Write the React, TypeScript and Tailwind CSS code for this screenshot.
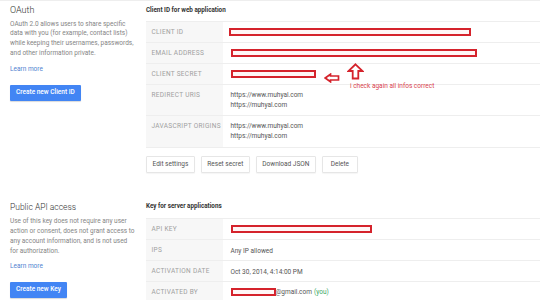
import React from "react";

function Redact({ w }: { w: string }) {
  return <span className={`inline-block h-[8px] border-2 border-[#d5232c] bg-[#fff6f6] ${w}`} />;
}

function Row({
  label,
  h,
  children,
}: {
  label: string;
  h: string;
  children: React.ReactNode;
}) {
  return (
    <div className={`flex border-t border-[#eeeeee] ${h}`}>
      <div className="w-[77px] shrink-0 bg-[#f7f7f7] pl-[5.5px] pt-[4.5px] text-[6.5px] leading-[10px] tracking-[0.3px] text-[#a0a0a0] uppercase whitespace-nowrap">
        {label}
      </div>
      <div className="flex-1 pl-[7.5px] pt-[5px] text-[6.5px] leading-[10.3px] text-[#555] whitespace-nowrap">
        {children}
      </div>
    </div>
  );
}

function Btn({ children, extra = "" }: { children: React.ReactNode; extra?: string }) {
  return (
    <button
      className={`h-[17px] px-[5.5px] border border-[#e6e6e6] rounded-[1px] bg-white text-[6.5px] text-[#555] shadow-[0_1px_1px_rgba(0,0,0,0.04)] ${extra}`}
    >
      {children}
    </button>
  );
}

export default function App() {
  return (
    <div className="relative w-[540px] h-[300px] overflow-hidden bg-white border-t border-[#eeeeee] font-[Roboto,Arial,sans-serif]">
      {/* Section 1 */}
      <div className="flex h-[195px]">
        <div className="w-[146px] shrink-0 pl-[10px] pt-[3px]">
          <div className="text-[9px] leading-[12px] font-light text-[#333]">OAuth</div>
          <div className="mt-[3.5px] text-[6.5px] leading-[9.7px] text-[#858585] whitespace-nowrap">
            OAuth 2.0 allows users to share specific
            <br />
            data with you (for example, contact lists)
            <br />
            while keeping their usernames, passwords,
            <br />
            and other information private.
          </div>
          <div className="mt-[5.7px] text-[6.5px] leading-[10px] text-[#5283d0]">Learn more</div>
          <button className="mt-[11px] h-[16px] px-[6px] rounded-[1px] bg-[#4285f4] text-[6.5px] font-medium text-white shadow-[0_1px_1px_rgba(0,0,0,0.15)]">
            Create new Client ID
          </button>
        </div>
        <div className="flex-1">
          <div className="h-[20px] flex items-center text-[6.3px] font-bold text-[#333]">
            Client ID for web application
          </div>
          <div className="border-b border-[#eeeeee]">
            <Row label="Client ID" h="h-[21px]">
              <div className="h-[10px] flex items-center -ml-[2px]">
                <Redact w="w-[242px]" />
              </div>
            </Row>
            <Row label="Email address" h="h-[21px]">
              <div className="h-[10px] flex items-center">
                <Redact w="w-[246px]" />
              </div>
            </Row>
            <Row label="Client secret" h="h-[21px]">
              <div className="h-[10px] flex items-center">
                <Redact w="w-[85px]" />
              </div>
            </Row>
            <Row label="Redirect URIs" h="h-[31px]">
              <div>https://www.muhyal.com</div>
              <div>https://muhyal.com</div>
            </Row>
            <Row label="Javascript origins" h="h-[32px]">
              <div>https://www.muhyal.com</div>
              <div>https://muhyal.com</div>
            </Row>
          </div>
          <div className="mt-[8px] flex gap-[6px]">
            <Btn>Edit settings</Btn>
            <Btn>Reset secret</Btn>
            <Btn>Download JSON</Btn>
            <Btn extra="min-w-[36px]">Delete</Btn>
          </div>
        </div>
      </div>

      {/* Section 2 */}
      <div className="flex">
        <div className="w-[146px] shrink-0 pl-[10px] pt-[4.7px]">
          <div className="text-[8.5px] leading-[12px] font-light text-[#333]">Public API access</div>
          <div className="mt-[4.8px] text-[6.5px] leading-[9.7px] text-[#858585] whitespace-nowrap">
            Use of this key does not require any user
            <br />
            action or consent, does not grant access to
            <br />
            any account information, and is not used
            <br />
            for authorization.
          </div>
          <div className="mt-[4.4px] text-[6.5px] leading-[10px] text-[#5283d0]">Learn more</div>
          <button className="mt-[11px] h-[16px] px-[6px] rounded-[1px] bg-[#4285f4] text-[6.5px] font-medium text-white shadow-[0_1px_1px_rgba(0,0,0,0.15)]">
            Create new Key
          </button>
        </div>
        <div className="flex-1">
          <div className="h-[22px] flex items-center text-[6.3px] font-bold text-[#333]">
            Key for server applications
          </div>
          <Row label="API key" h="h-[21px]">
            <div className="h-[10px] flex items-center">
              <Redact w="w-[141px]" />
            </div>
          </Row>
          <Row label="IPs" h="h-[21px]">
            <div className="pt-[1px]">Any IP allowed</div>
          </Row>
          <Row label="Activation date" h="h-[21px]">
            <div className="pt-[1px]">Oct 30, 2014, 4:14:00 PM</div>
          </Row>
          <Row label="Activated by" h="h-[21px]">
            <div className="h-[10px] flex items-center">
              <Redact w="w-[45px]" />
              <span>@gmail.com</span>
              <span className="ml-[2px] text-[#3aa866]">(you)</span>
            </div>
          </Row>
        </div>
      </div>

      {/* Annotation overlay */}
      <svg className="absolute left-[324px] top-[72px]" width="16" height="10" viewBox="0 0 16 10">
        <polygon
          points="1.2,5 6.5,1.2 6.5,3 14.5,3 14.5,7 6.5,7 6.5,8.8"
          fill="#fff"
          stroke="#d5232c"
          strokeWidth="1.7"
          strokeLinejoin="miter"
        />
      </svg>
      <svg className="absolute left-[347px] top-[62px]" width="17" height="17" viewBox="0 0 17 17">
        <polygon
          points="8.5,1.3 15.5,8 11.3,8 11.3,15.5 5.7,15.5 5.7,8 1.5,8"
          fill="#fff"
          stroke="#d5232c"
          strokeWidth="1.8"
          strokeLinejoin="miter"
        />
      </svg>
      <div className="absolute left-[350px] top-[80px] text-[6.5px] leading-[10px] text-[#d9434f] whitespace-nowrap">
        i check again all infos correct
      </div>
    </div>
  );
}
